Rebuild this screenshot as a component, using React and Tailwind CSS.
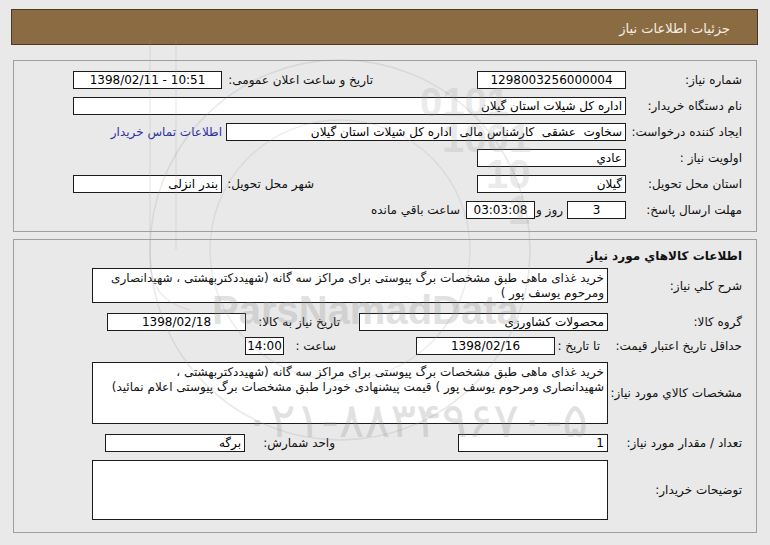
import React from 'react';

const Field = ({ className = '', children, ltr, center }) => (
  <div
    dir={ltr ? 'ltr' : 'rtl'}
    className={`shrink-0 border border-[#1c1c1c] bg-white px-[3px] flex items-center overflow-hidden whitespace-pre leading-none text-black ${
      center ? 'justify-center' : 'justify-start'
    } ${className}`}
  >
    {children}
  </div>
);

const Row = ({ children }) => <div className="flex items-center h-[18px]">{children}</div>;

// faint site watermark laid over the form
const Watermark = () => (
  <div className="absolute inset-0 pointer-events-none select-none" dir="ltr">
    <div className="absolute left-[420px] top-[84px] text-[40px] font-bold leading-[36px] text-[#9a9a9a] opacity-20 font-['Liberation_Sans',sans-serif]">
      <div>0101</div>
      <div className="pl-[22px]">1001</div>
      <div className="pl-[66px]">10</div>
      <div className="pl-[88px]">1</div>
    </div>
    <div className="absolute left-[212px] top-[290px] text-[40px] font-bold leading-none text-[#8c8c8c] opacity-25 font-['Liberation_Sans',sans-serif]">
      ParsNamadData
    </div>
    <div className="absolute left-[244px] top-[396px] text-[48px] leading-none text-[#8c8c8c] opacity-25 font-['DejaVu_Sans',sans-serif]">
      ۰۲۱-۸۸۳۴۹۶۷۰-۵
    </div>
    <svg className="absolute left-0 top-0" width="770" height="545" viewBox="0 0 770 545" fill="none">
      <circle cx="340" cy="250" r="190" stroke="#9a9a9a" strokeOpacity="0.22" strokeWidth="1.5" />
      <circle cx="340" cy="250" r="130" stroke="#9a9a9a" strokeOpacity="0.18" strokeWidth="1.5" />
      <path d="M150 40 L150 260 Q150 300 190 310" stroke="#9a9a9a" strokeOpacity="0.18" strokeWidth="1.5" />
      <path d="M176 40 L176 250" stroke="#9a9a9a" strokeOpacity="0.18" strokeWidth="1.5" />
    </svg>
  </div>
);

export default function App() {
  return (
    <div className="relative w-[770px] h-[545px] overflow-hidden bg-[#e9e9e9] text-[12px] text-[#111] font-['DejaVu_Sans',sans-serif]">
      <div dir="rtl" className="flex flex-col">
        {/* header */}
        <div className="mt-[9px] mr-[12px] w-[747px] h-[36px] bg-[#8b6c42] border border-[#4b3b24] flex items-center pr-[27px] pt-[4px] text-[13px] text-[#f4efe4]">
          جزئیات اطلاعات نیاز
        </div>

        {/* panel 1 */}
        <div className="mt-[15px] mr-[13px] w-[744px] border border-[#9f9f9f] pt-[10px] pb-[12px] pr-[14px] flex flex-col gap-[8px]">
          <Row>
            <div className="w-[116px] shrink-0 whitespace-nowrap">شماره نیاز:</div>
            <Field ltr center className="w-[149px] h-[18px]">1298003256000004</Field>
            <div className="w-[104px] shrink-0" />
            <div className="w-[151px] shrink-0 whitespace-nowrap">تاریخ و ساعت اعلان عمومی:</div>
            <Field ltr center className="w-[149px] h-[18px]">1398/02/11 - 10:51</Field>
          </Row>
          <Row>
            <div className="w-[116px] shrink-0 whitespace-nowrap">نام دستگاه خریدار:</div>
            <Field className="w-[553px] h-[18px]">اداره کل شیلات استان گیلان</Field>
          </Row>
          <Row>
            <div className="w-[116px] shrink-0 whitespace-nowrap">ایجاد کننده درخواست:</div>
            <Field className="w-[400px] h-[18px]">سخاوت  عشقی  کارشناس مالی  اداره کل شیلات استان گیلان</Field>
            <div className="w-[4px] shrink-0" />
            <a className="whitespace-nowrap text-[#2f2fa3] cursor-pointer">اطلاعات تماس خریدار</a>
          </Row>
          <Row>
            <div className="w-[116px] shrink-0 whitespace-nowrap">اولویت نیاز :</div>
            <Field className="w-[149px] h-[18px]">عادي</Field>
          </Row>
          <Row>
            <div className="w-[116px] shrink-0 whitespace-nowrap">استان محل تحویل:</div>
            <Field className="w-[149px] h-[18px]">گیلان</Field>
            <div className="w-[163px] shrink-0" />
            <div className="w-[92px] shrink-0 whitespace-nowrap">شهر محل تحویل:</div>
            <Field className="w-[149px] h-[18px]">بندر انزلی</Field>
          </Row>
          <Row>
            <div className="w-[116px] shrink-0 whitespace-nowrap">مهلت ارسال پاسخ:</div>
            <Field ltr center className="w-[59px] h-[18px]">3</Field>
            <div className="w-[32px] shrink-0 whitespace-nowrap pr-[4px]">روز و</div>
            <Field ltr center className="w-[69px] h-[18px]">03:03:08</Field>
            <div className="shrink-0 whitespace-nowrap pr-[6px]">ساعت باقي مانده</div>
          </Row>
        </div>

        {/* panel 2 */}
        <div className="mt-[7px] mr-[13px] w-[744px] border border-[#9f9f9f] pt-[7px] pb-[12px] pr-[14px] flex flex-col">
          <div className="h-[18px] flex items-center font-bold whitespace-nowrap">اطلاعات کالاهاي مورد نیاز</div>

          <div className="mt-[3px] flex items-center">
            <div className="w-[134px] shrink-0 whitespace-nowrap">شرح کلي نیاز:</div>
            <div className="w-[516px] h-[35px] shrink-0 border border-[#1c1c1c] bg-white px-[3px] pt-[2px] leading-[15px] overflow-hidden">
              <div className="whitespace-nowrap overflow-hidden">خرید غذای ماهی طبق مشخصات برگ پیوستی برای مراکز سه گانه (شهیددکتربهشتی ، شهیدانصاری</div>
              <div className="whitespace-nowrap overflow-hidden">ومرحوم یوسف پور )</div>
            </div>
          </div>

          <div className="mt-[10px]">
            <Row>
              <div className="w-[134px] shrink-0 whitespace-nowrap">گروه کالا:</div>
              <Field className="w-[249px] h-[18px]">محصولات کشاورزی</Field>
              <div className="w-[19px] shrink-0" />
              <div className="w-[94px] shrink-0 whitespace-nowrap">تاریخ نیاز به کالا:</div>
              <Field ltr center className="w-[139px] h-[18px]">1398/02/18</Field>
            </Row>
          </div>

          <div className="mt-[6px]">
            <Row>
              <div className="w-[134px] shrink-0 whitespace-nowrap">حداقل تاریخ اعتبار قیمت:</div>
              <div className="w-[53px] shrink-0 whitespace-nowrap pr-[8px]">تا تاریخ :</div>
              <Field ltr center className="w-[139px] h-[18px]">1398/02/16</Field>
              <div className="w-[80px] shrink-0" />
              <div className="w-[52px] shrink-0 whitespace-nowrap">ساعت :</div>
              <Field ltr center className="w-[39px] h-[18px]">14:00</Field>
            </Row>
          </div>

          <div className="mt-[7px] flex items-center">
            <div className="w-[134px] shrink-0 whitespace-nowrap">مشخصات کالاي مورد نیاز:</div>
            <div className="w-[516px] h-[62px] shrink-0 border border-[#1c1c1c] bg-white px-[3px] pt-[2px] leading-[15px] overflow-hidden">
              <div className="whitespace-nowrap overflow-hidden">خرید غذای ماهی طبق مشخصات برگ پیوستی برای مراکز سه گانه (شهیددکتربهشتی ،</div>
              <div className="whitespace-nowrap overflow-hidden">شهیدانصاری ومرحوم یوسف پور ) قیمت پیشنهادی خودرا طبق مشخصات برگ پیوستی اعلام نمائید)</div>
            </div>
          </div>

          <div className="mt-[10px]">
            <Row>
              <div className="w-[134px] shrink-0 whitespace-nowrap">تعداد / مقدار مورد نیاز:</div>
              <Field className="w-[150px] h-[18px]">1</Field>
              <div className="w-[123px] shrink-0" />
              <div className="w-[90px] shrink-0 whitespace-nowrap">واحد شمارش:</div>
              <Field className="w-[140px] h-[18px]">برگه</Field>
            </Row>
          </div>

          <div className="mt-[8px] flex items-center">
            <div className="w-[134px] shrink-0 whitespace-nowrap">توضیحات خریدار:</div>
            <div className="w-[516px] h-[60px] shrink-0 border border-[#1c1c1c] bg-white" />
          </div>
        </div>
      </div>
      <Watermark />
    </div>
  );
}
